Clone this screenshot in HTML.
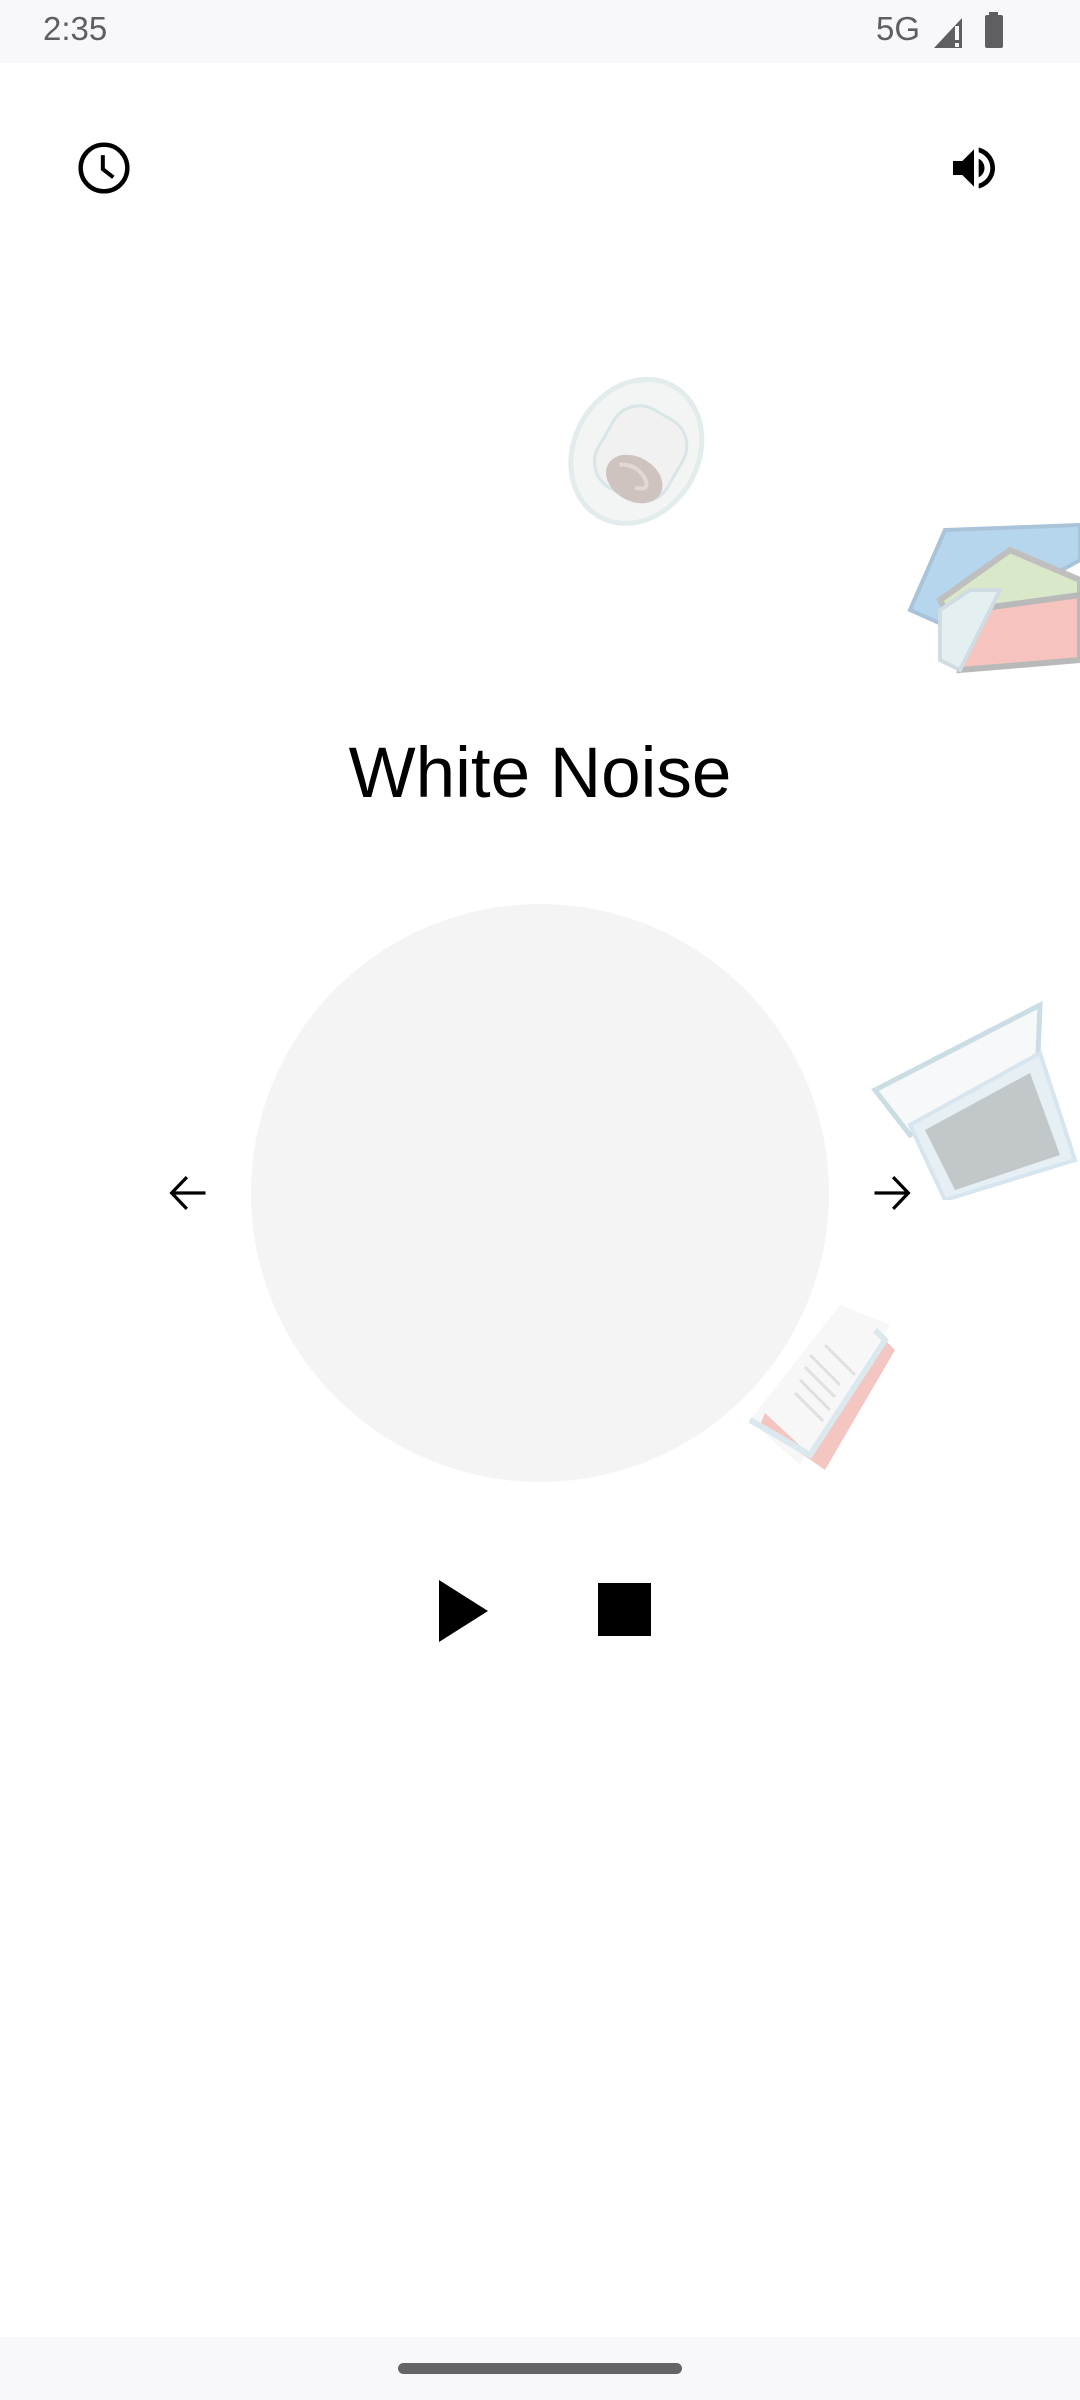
<!DOCTYPE html>
<html><head><meta charset="utf-8"><style>
html,body{margin:0;padding:0}
body{width:1080px;height:2400px;position:relative;background:#fff;overflow:hidden;font-family:"Liberation Sans",sans-serif}
.abs{position:absolute}
</style></head><body>
<div class="abs" style="left:0;top:0;width:1080px;height:63px;background:#f7f7fc"></div>
<div class="abs" style="left:43px;top:10px;font-size:33px;color:#5f5f63">2:35</div>
<div class="abs" style="left:876px;top:10px;font-size:33px;color:#5f5f63">5G</div>
<svg class="abs" style="left:932px;top:14px" width="36" height="36" viewBox="0 0 36 36"><path d="M2 34 L30 4 L30 34Z" fill="#5f5f63"/><rect x="23" y="12" width="4" height="14" fill="#f7f7fc"/><rect x="23" y="29" width="4" height="4" fill="#f7f7fc"/></svg>
<svg class="abs" style="left:984px;top:12px" width="20" height="36" viewBox="0 0 20 36"><rect x="5" y="0" width="9" height="4" fill="#5f5f63"/><rect x="1" y="3" width="18" height="33" rx="2" fill="#5f5f63"/></svg>

<svg class="abs" style="left:76px;top:140px" width="56" height="56" viewBox="0 0 24 24"><circle cx="12" cy="12" r="10" fill="none" stroke="#000" stroke-width="1.9"/><path d="M11.5 6.5v6l4.5 3.5" fill="none" stroke="#000" stroke-width="1.7"/></svg>
<svg class="abs" style="left:946px;top:140px" width="56" height="56" viewBox="0 0 24 24"><path d="M3 9v6h4l5 5V4L7 9H3zm13.5 3c0-1.77-1.02-3.29-2.5-4.03v8.05c1.48-.73 2.5-2.25 2.5-4.02zM14 3.23v2.06c2.890.86 5 3.54 5 6.71s-2.11 5.85-5 6.71v2.06c4.01-.91 7-4.490 7-8.77s-2.99-7.86-7-8.77z" fill="#000"/></svg>

<!-- coffee cup -->
<svg class="abs" style="left:550px;top:360px" width="180" height="210" viewBox="0 0 180 210">
<g transform="rotate(30 90 105)">
<ellipse cx="80" cy="95" rx="62" ry="75" fill="#f3f5f5" stroke="#e3ecec" stroke-width="5"/>
<rect x="45" y="50" width="80" height="90" rx="30" fill="#f1f1f1" stroke="#d8e6e8" stroke-width="3"/>
<ellipse cx="92" cy="120" rx="30" ry="22" fill="#cfc3c0"/>
<path d="M72 115 q15 -10 30 0 q10 8 -5 12" fill="none" stroke="#e2d8d4" stroke-width="4"/>
</g></svg>
<!-- books -->
<svg class="abs" style="left:900px;top:520px" width="180" height="165" viewBox="0 0 180 165">
<path d="M45 10 L180 5 L180 40 L55 110 L10 90Z" fill="#b6d6ee" stroke="#a9c3d8" stroke-width="4"/>
<path d="M40 80 L110 30 L180 60 L180 90 L70 140Z" fill="#d8e8c8" stroke="#bfbfbf" stroke-width="6"/>
<path d="M70 90 L180 75 L180 140 L60 150Z" fill="#f7c3bf" stroke="#b9b9b9" stroke-width="6"/>
<path d="M40 90 L70 70 L100 70 L60 150 L40 140Z" fill="#e4eff2" stroke="#cfdce2" stroke-width="4"/>
</svg>

<div class="abs" style="left:0;width:1080px;top:733px;text-align:center;font-size:71px;color:#000">White Noise</div>

<div class="abs" style="left:251px;top:904px;width:578px;height:578px;border-radius:50%;background:#f4f4f4"></div>

<!-- laptop -->
<svg class="abs" style="left:870px;top:995px" width="210" height="205" viewBox="0 0 210 205">
<path d="M5 95 L170 10 L168 60 L40 140Z" fill="#f6f8f9" stroke="#c9dde3" stroke-width="5"/>
<path d="M40 130 L170 58 L205 165 L75 205Z" fill="#e6eff4" stroke="#d6e5ee" stroke-width="4"/>
<path d="M55 135 L160 78 L190 160 L85 195Z" fill="#c2c8c9"/>
</svg>
<!-- open book -->
<svg class="abs" style="left:740px;top:1305px" width="155" height="170" viewBox="0 0 155 170">
<path d="M10 115 L60 160 L150 20 L100 0 Z" fill="#f7f7f7"/>
<path d="M20 120 L85 165 L155 45 L145 35 L70 150 L25 108Z" fill="#f3c6c2"/>
<path d="M10 115 L70 150 L145 35 L135 25" fill="none" stroke="#dbe9ee" stroke-width="6"/>
<g stroke="#e0e0e0" stroke-width="3"><path d="M70 50 l30 30 M65 62 l30 30 M60 75 l30 30 M55 88 l28 28 M85 40 l30 30"/></g>
</svg>

<svg class="abs" style="left:160px;top:1165px" width="56" height="56" viewBox="0 0 24 24"><path d="M19.5 12H5 M11.5 5.2L5 12l6.5 6.8" fill="none" stroke="#000" stroke-width="1.4"/></svg>
<svg class="abs" style="left:864px;top:1165px" width="56" height="56" viewBox="0 0 24 24"><path d="M4.5 12H19 M12.5 5.2L19 12l-6.5 6.8" fill="none" stroke="#000" stroke-width="1.4"/></svg>

<svg class="abs" style="left:439px;top:1580px" width="49" height="62" viewBox="0 0 49 62"><path d="M0 0 L49 31 L0 62Z" fill="#000"/></svg>
<div class="abs" style="left:598px;top:1583px;width:53px;height:53px;background:#000"></div>

<div class="abs" style="left:0;top:2337px;width:1080px;height:63px;background:#f7f7fc"></div>
<div class="abs" style="left:398px;top:2363px;width:284px;height:11px;border-radius:6px;background:#646466"></div>
</body></html>
